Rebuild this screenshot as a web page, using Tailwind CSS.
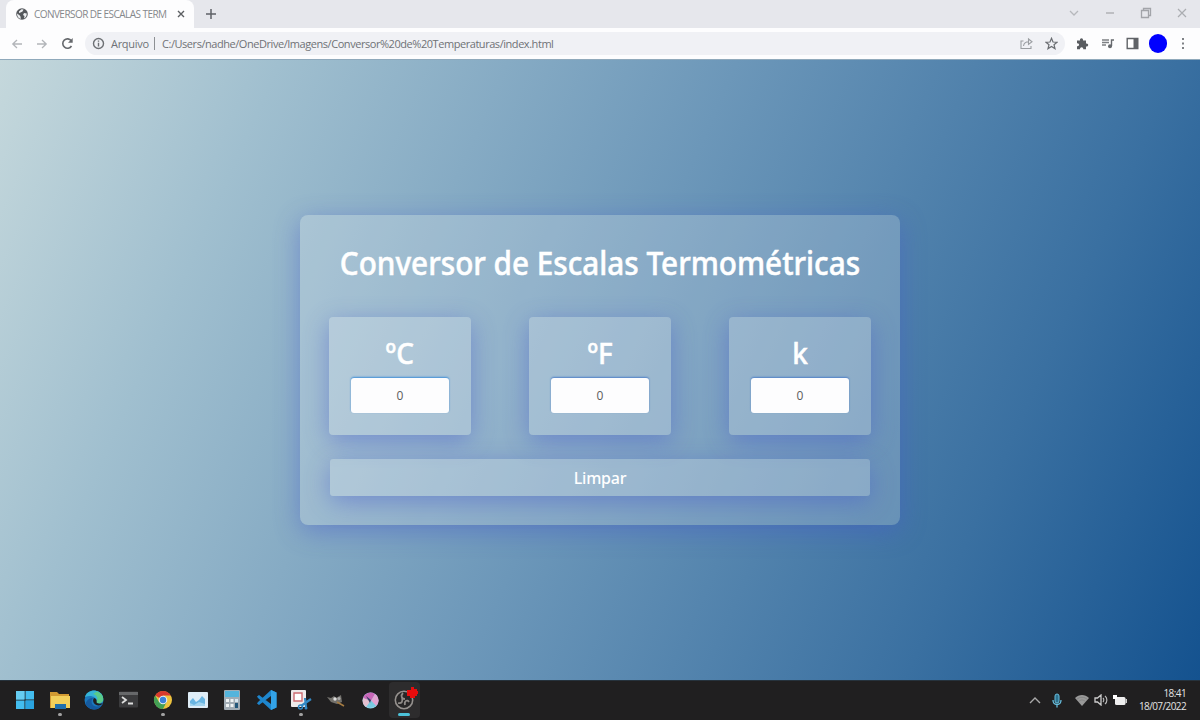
<!DOCTYPE html>
<html lang="pt-BR">
<head>
<meta charset="utf-8">
<title>CONVERSOR DE ESCALAS TERMOMÉTRICAS</title>
<script src="https://cdn.jsdelivr.net/npm/@tailwindcss/browser@4"></script>
</head>
<body class="w-[1200px] h-[720px] overflow-hidden flex flex-col font-['Open_Sans','Noto_Sans',sans-serif]">

<!-- Tab strip -->
<header class="h-[28px] shrink-0 bg-[#e6e7ec] flex items-stretch pl-[6px]">
  <div class="w-[188px] bg-[#fdfdfe] rounded-t-lg flex items-center pl-[10px] pr-[7px]">
    <svg class="size-[12px] shrink-0" viewBox="0 0 12 12"><circle cx="6" cy="6" r="5.8" fill="#55585c"/><path d="M1 5.5 3.500 7.200 4.500 8.500 4.800 11C2.500 10.500 1 8.500 1 5.500ZM5.500 1.200 7.500 1.500 6.500 3.500 4.500 4.500 3 5 3 3.500ZM8 5 10.800 5.500C10.800 8 9.500 9.800 8 10.400L8.500 8 7 7Z" fill="#eef0f2"/></svg>
    <div class="ml-[6px] w-[135px] whitespace-nowrap text-[10px] leading-[14px] tracking-[-0.55px] text-[#85888c]">CONVERSOR DE ESCALAS TERM</div>
    <svg class="ml-[8px] size-[8px] shrink-0" viewBox="0 0 8 8"><path d="M1 1 7 7M7 1 1 7" stroke="#5c5f63" stroke-width="1.4"/></svg>
  </div>
  <svg class="ml-[11px] mt-[8px] size-[12px]" viewBox="0 0 12 12"><path d="M6 1V11M1 6H11" stroke="#5f6267" stroke-width="1.5"/></svg>
  <div class="ml-auto mr-[12px] mt-[-2px] flex items-center gap-[24px]">
    <svg class="size-[12px]" viewBox="0 0 12 12"><path d="M2 4 6 8 10 4" fill="none" stroke="#b6b8bc" stroke-width="1.3"/></svg>
    <svg class="size-[12px]" viewBox="0 0 12 12"><path d="M2 6H10" stroke="#acaeb2" stroke-width="1.4"/></svg>
    <svg class="size-[12px]" viewBox="0 0 12 12"><path d="M1.500 3.500H8.500V10.500H1.500ZM3.500 3V1.500H10.500V8.500H9" fill="none" stroke="#a2a4a9" stroke-width="1.3"/></svg>
    <svg class="size-[12px]" viewBox="0 0 12 12"><path d="M2 2 10 10M10 2 2 10" stroke="#abadb1" stroke-width="1.2"/></svg>
  </div>
</header>

<!-- Toolbar -->
<nav class="h-[31px] shrink-0 bg-[#fdfdfe] flex items-center pl-[11px] pr-[12px]">
  <svg class="size-[12px]" viewBox="0 0 12 12"><path d="M11 6H2M6 2 1.800 6 6 10" fill="none" stroke="#b2b5b9" stroke-width="1.3"/></svg>
  <svg class="ml-[13px] size-[12px]" viewBox="0 0 12 12"><path d="M1 6H10M6 2 10.200 6 6 10" fill="none" stroke="#b2b5b9" stroke-width="1.3"/></svg>
  <svg class="ml-[13px] size-[13px]" viewBox="0 0 13 13"><path d="M10.500 9A4.700 4.700 0 1 1 10.300 3.800" fill="none" stroke="#66696d" stroke-width="1.6"/><path d="M11.700 1V5.700H7Z" fill="#66696d"/></svg>
  <div class="ml-[11px] w-[980px] h-[23px] rounded-full bg-[#f0f1f5] flex items-center pl-[7px] pr-[7px]">
    <svg class="size-[13px] shrink-0" viewBox="0 0 13 13"><circle cx="6.500" cy="6.500" r="5" fill="none" stroke="#6d7074" stroke-width="1.400"/><path d="M6.500 5.700V9.400M6.500 3.500V4.800" stroke="#6d7074" stroke-width="1.400"/></svg>
    <div class="ml-[6px] w-[40px] text-[11px] leading-4 tracking-[-0.3px] text-[#6f7276]">Arquivo</div>
    <div class="w-px h-[13px] ml-[3px] bg-[#8d9094]"></div>
    <div class="ml-[7px] text-[11px] leading-4 tracking-[-0.45px] text-[#6f7276] whitespace-nowrap">C:/Users/nadhe/OneDrive/Imagens/Conversor%20de%20Temperaturas/index.html</div>
    <svg class="ml-auto size-[13px] shrink-0" viewBox="0 0 13 13"><path d="M3.500 4H1V11.500H11V9M3.500 9C4 6 6 4.800 8.500 4.800M8.500 2V7.500L12 4.800Z" fill="none" stroke="#9b9ea2" stroke-width="1.100"/></svg>
    <svg class="ml-[12px] size-[13px] shrink-0" viewBox="0 0 13 13"><path d="M6.500 1.300 8 5 12 5.200 9 7.700 10 11.600 6.500 9.400 3 11.600 4 7.700 1 5.200 5 5Z" fill="none" stroke="#6a6d71" stroke-width="1.200"/></svg>
  </div>
  <svg class="ml-[11px] size-[13px]" viewBox="0 0 13 13"><path d="M1 3.500H4C3.500 .5 7.500 .5 7 3.500H10V6.500C13 6 13 10 10 9.500V12.200H7.300C7.500 9.500 3.800 9.500 4 12.200H1V9.200C3.800 9.500 3.800 6 1 6.300Z" fill="#595c60"/></svg>
  <svg class="ml-[12px] size-[14px]" viewBox="0 0 14 14"><path d="M1 3H8M1 5.500H8M1 8H5" stroke="#7d8084" stroke-width="1.300"/><path d="M13 3H10.500V9" fill="none" stroke="#66696d" stroke-width="1.400"/><circle cx="9" cy="9.300" r="2" fill="#66696d"/></svg>
  <svg class="ml-[11px] size-[13px]" viewBox="0 0 13 13"><path d="M1.200 1.500H11.800V11.500H1.200Z" fill="#fff" stroke="#606367" stroke-width="1.400"/><path d="M7.500 1.500H12V11.500H7.500Z" fill="#606367"/></svg>
  <div class="ml-[10px] w-[18px] h-[19px] shrink-0 rounded-full bg-[#0000ff]"></div>
  <svg class="ml-[11px] w-[10px] h-[13px]" viewBox="0 0 10 13"><path d="M4 1H6V3H4ZM4 5.500H6V7.500H4ZM4 10H6V12H4Z" fill="#7f8286"/></svg>
</nav>

<!-- Page -->
<main class="h-[621px] shrink-0 border-t border-[#8fa9bb] bg-[linear-gradient(114deg,#c5d8dc_0%,#a0bfcf_19%,#6c97b9_50%,#3a70a1_80%,#14528f_100%)] flex justify-center items-start pt-[155px]">
  <section class="w-[600px] h-[310px] rounded-[8px] bg-white/20 shadow-[0_6px_26px_rgba(70,90,205,0.46)] px-[30px] flex flex-col">
    <h1 class="-mx-[30px] mt-[24px] h-[48px] text-center whitespace-nowrap text-[33px] leading-[48px] font-medium text-white scale-x-[0.9] [-webkit-text-stroke:0.5px_white] font-['Noto_Sans',sans-serif]">Conversor de Escalas Termométricas</h1>
    <div class="mt-[30px] -mx-px flex justify-between">
      <div class="w-[142px] h-[118px] rounded-[4px] bg-white/20 shadow-[0_6px_24px_rgba(70,90,205,0.46)] flex flex-col items-center">
        <div class="mt-[16px] h-[40px] text-[29px] leading-[40px] font-medium text-white scale-x-[0.96] [-webkit-text-stroke:0.5px_white] font-['Noto_Sans',sans-serif]">ºC</div>
        <div class="mt-[5px] w-[98px] h-[35px] rounded-[3px] bg-[#fdfdfe] shadow-[0_-1px_2px_#3f8fd8] flex items-center justify-center text-[12px] text-[#5c5c5c]">0</div>
      </div>
      <div class="w-[142px] h-[118px] rounded-[4px] bg-white/20 shadow-[0_6px_24px_rgba(70,90,205,0.46)] flex flex-col items-center">
        <div class="mt-[16px] h-[40px] text-[29px] leading-[40px] font-medium text-white scale-x-[0.96] [-webkit-text-stroke:0.5px_white] font-['Noto_Sans',sans-serif]">ºF</div>
        <div class="mt-[5px] w-[98px] h-[35px] rounded-[3px] bg-[#fdfdfe] shadow-[0_-1px_2px_#4f80c8] flex items-center justify-center text-[12px] text-[#5c5c5c]">0</div>
      </div>
      <div class="w-[142px] h-[118px] rounded-[4px] bg-white/20 shadow-[0_6px_24px_rgba(70,90,205,0.46)] flex flex-col items-center">
        <div class="mt-[16px] h-[40px] text-[29px] leading-[40px] font-medium text-white scale-x-[0.96] [-webkit-text-stroke:0.5px_white] font-['Noto_Sans',sans-serif]">k</div>
        <div class="mt-[5px] w-[98px] h-[35px] rounded-[3px] bg-[#fdfdfe] shadow-[0_-1px_2px_#4f80c8] flex items-center justify-center text-[12px] text-[#5c5c5c]">0</div>
      </div>
    </div>
    <button class="mt-[24px] h-[37px] shrink-0 rounded-[3px] bg-white/20 shadow-[0_6px_24px_rgba(70,90,205,0.46)] pt-px text-[16px] leading-[36px] tracking-[-0.2px] font-medium text-white font-['Noto_Sans',sans-serif]">Limpar</button>
  </section>
</main>

<!-- Taskbar -->
<footer class="h-[40px] shrink-0 bg-[#201f20] border-t border-[#26323c] flex items-start">
  <div class="flex pl-[8px] pt-[2px]">
    <div class="w-[34.5px] flex flex-col items-center pt-[7px]">
      <svg class="size-[20px]" viewBox="0 0 20 20"><path d="M1 1H9.500V9.500H1ZM10.500 1H19V9.500H10.500ZM1 10.500H9.500V19H1ZM10.500 10.500H19V19H10.500Z" fill="#43bdef"/><path d="M1 1H9.500V9.500H1Z" fill="#66cdf2"/><path d="M10.500 10.500H19V19H10.500Z" fill="#2aa3df"/></svg>
    </div>
    <div class="w-[34.5px] flex flex-col items-center pt-[7px]">
      <svg class="size-[20px] shrink-0" viewBox="0 0 20 20"><path d="M0 2H7L9 4H19V18H0Z" fill="#d29a32"/><path d="M1 6H20V18H1Z" fill="#f2cf5b"/><path d="M5 14H16V19H5Z" fill="#1f6fae"/></svg>
      <div class="mt-[3px] w-[4px] h-[3px] rounded bg-[#a2a2a2]"></div>
    </div>
    <div class="w-[34.5px] flex flex-col items-center pt-[7px]">
      <svg class="size-[20px]" viewBox="0 0 20 20"><circle cx="10" cy="10" r="9.500" fill="#1b78bd"/><path d="M1 7C3-1 16-2 19 7 20 12 17 14 12 13 14 8 8 4 1 7Z" fill="#35b4d8"/><path d="M13 1.500C18 3 20 8 19 11 17 14 14 14 12 12 15 9 13 5 9 4Z" fill="#5acb8a"/><path d="M9 8C5 13 10 18 16 16L18 15C14 22 4 20 1.500 14 3 9 6 8 9 8Z" fill="#155a9f"/><path d="M10 8C14 9 12 12 13 13 15 14 17 14 19 13L17 15C12 17 7 12 10 8Z" fill="#201f20"/></svg>
    </div>
    <div class="w-[34.5px] flex flex-col items-center pt-[8px]">
      <svg class="w-[19px] h-[17px]" viewBox="0 0 19 17"><rect width="19" height="16" y=".5" rx="1" fill="#3b3b3d"/><path d="M0 1H19V4H0Z" fill="#67686a"/><path d="M3 6 7 9 3 12M9 12.500H14" fill="none" stroke="#dedede" stroke-width="1.800"/></svg>
    </div>
    <div class="w-[34.5px] flex flex-col items-center pt-[7px]">
      <svg class="size-[20px] shrink-0" viewBox="0 0 20 20"><circle cx="10" cy="10" r="9" fill="#edc33e"/><path d="M10 10 2.200 5.500A9 9 0 0 1 17.800 5.500H10Z" fill="#d8392e"/><path d="M2.200 5.500A9 9 0 0 0 10 19L13.500 12 6 12Z" fill="#43a055"/><circle cx="10" cy="10" r="4.300" fill="#e9eef5"/><circle cx="10" cy="10" r="3.200" fill="#3b82d8"/></svg>
      <div class="mt-[3px] w-[4px] h-[3px] rounded bg-[#a2a2a2]"></div>
    </div>
    <div class="w-[34.5px] flex flex-col items-center pt-[9px]">
      <svg class="w-[20px] h-[16px]" viewBox="0 0 20 16"><rect width="20" height="16" rx="1" fill="#dfedf7"/><path d="M2 14V9L5 6 8 10 11 8 14 4 17 7V14Z" fill="#69b5e2"/><path d="M2 11 6 13 11 10 17 12V14H2Z" fill="#a2d3ee"/></svg>
    </div>
    <div class="w-[34.5px] flex flex-col items-center pt-[7px]">
      <svg class="w-[16px] h-[20px]" viewBox="0 0 16 20"><rect width="16" height="20" rx="1" fill="#a1acb5"/><path d="M1 1H15V7H1Z" fill="#54b4dc"/><path d="M2 9H5V12H2ZM6.500 9H9.500V12H6.500ZM2 14H5V17H2ZM6.500 14H9.500V17H6.500Z" fill="#eff3f5"/><path d="M11 9H14V12H11Z" fill="#d7e7f1"/><path d="M11 13H14V18H11Z" fill="#23577b"/></svg>
    </div>
    <div class="w-[34.5px] flex flex-col items-center pt-[7px]">
      <svg class="size-[20px]" viewBox="0 0 20 20"><path d="M14 0 19.500 2.500V17.500L14 20 1 8 0 6.500 2 5 14 14V6L2 15 0 13.500 1 12Z" fill="#1e86cd"/><path d="M14 0 19.500 2.500V17.500L14 20Z" fill="#33a3e8"/></svg>
    </div>
    <div class="w-[34.5px] flex flex-col items-center pt-[7px]">
      <svg class="size-[20px] shrink-0 overflow-visible" viewBox="0 0 20 20"><rect width="15" height="17" rx="1" fill="#eeeaea"/><path d="M3 3H11V11H3Z" fill="#fff" stroke="#cd6c72" stroke-width="1.400"/><path d="M20 9 10 16M14 8 15 17" stroke="#3388c4" stroke-width="2.200"/><circle cx="9.500" cy="17" r="2" fill="none" stroke="#3388c4" stroke-width="1.500"/><circle cx="15" cy="18" r="1.500" fill="#3388c4"/></svg>
      <div class="mt-[3px] w-[4px] h-[3px] rounded bg-[#a2a2a2]"></div>
    </div>
    <div class="w-[34.5px] flex flex-col items-center pt-[10px]">
      <svg class="w-[18px] h-[14px]" viewBox="0 0 18 14"><path d="M0 4 4 5 7 3 9 5 14 2 15 9 10 11 4 9Z" fill="#73716c"/><circle cx="8" cy="6" r="1.700" fill="#ddd"/><circle cx="12" cy="5.500" r="1.500" fill="#aaa"/><path d="M10 9 17 13" stroke="#a57c42" stroke-width="1.500"/></svg>
    </div>
    <div class="w-[34.5px] flex flex-col items-center pt-[9px]">
      <svg class="size-[17px]" viewBox="0 0 17 17"><circle cx="8.500" cy="8.500" r="8" fill="#8fd3e8"/><path d="M1 6A8 8 0 0 1 13 2L9 9Z" fill="#c966b8"/><path d="M9 9 13 2C17 5 18 10 14 14Z" fill="#e3a4d2"/><path d="M1 6 9 9 4 15C1 13 0 10 1 6Z" fill="#e4c0d0"/><path d="M9 8.500 14 14 7 16 5 14Z" fill="#79cbe2"/><path d="M4 4 9 8 8 11Z" fill="#344166"/></svg>
    </div>
    <div class="relative ml-[1px] w-[31px] h-[36px] -mt-px rounded bg-[#2d2c2d] flex flex-col items-center pt-[8px]">
      <svg class="size-[20px] shrink-0" viewBox="0 0 20 20"><circle cx="10" cy="10" r="8.700" fill="#272627" stroke="#95918e" stroke-width="1.600"/><path d="M9 3C6 6 8 9 11 9M4 13C8 14 9 11 8 8M15 12C13 9 10 11 11 15" fill="none" stroke="#8f8b88" stroke-width="1.800"/></svg>
      <div class="mt-[3px] w-[12px] h-[3px] rounded bg-[#4cc2d9]"></div>
      <svg class="absolute top-[5px] right-[2px] size-[12px]" viewBox="0 0 12 12"><path d="M5 0H8V2H11V4H12V7H11V9H9V11H4V9H1V3H5Z" fill="#e80d0d"/></svg>
    </div>
  </div>
  <div class="ml-auto flex items-center h-[38px] pr-[14px]">
    <svg class="size-[12px]" viewBox="0 0 12 12"><path d="M1 9 6 4 11 9" fill="none" stroke="#aaa" stroke-width="1.400"/></svg>
    <svg class="ml-[11px] w-[10px] h-[15px]" viewBox="0 0 10 15"><rect x="3" y="1" width="4" height="9" rx="2" fill="#2d718d" stroke="#67bddd"/><path d="M1 7C1 13 9 13 9 7M5 12V14.500" fill="none" stroke="#67bddd" stroke-width="1.300"/></svg>
    <svg class="ml-[13px] w-[14px] h-[12px]" viewBox="0 0 14 12"><path d="M0 4C4 0 10 0 14 4L7 12Z" fill="#999"/><path d="M1.500 5.500C5 2.500 9 2.500 12.500 5.500M3.500 7.500C6 5.500 8 5.500 10.500 7.500" fill="none" stroke="#777" stroke-width=".6"/></svg>
    <svg class="ml-[5px] w-[14px] h-[12px]" viewBox="0 0 14 12"><path d="M1 4H3.500L7 1V11L3.500 8H1Z" fill="none" stroke="#ccc" stroke-width="1.300"/><path d="M9 4C10 5 10 7 9 8M11 2C13.500 4 13.500 8 11 10" fill="none" stroke="#bbb" stroke-width="1.200"/></svg>
    <svg class="ml-[5px] w-[14px] h-[12px]" viewBox="0 0 14 12"><rect x="2" y="3" width="10.500" height="8" rx="1.500" fill="#eee"/><path d="M12.500 5H14V9H12.500Z" fill="#ccc"/><path d="M0 1H4V5H0Z" fill="#fff"/></svg>
    <div class="ml-[10px] w-[49px] text-right text-[10px] leading-[13px] tracking-[-0.6px] text-[#e4e4e4] whitespace-nowrap"><div>18:41</div><div>18/07/2022</div></div>
  </div>
</footer>
</body>
</html>
